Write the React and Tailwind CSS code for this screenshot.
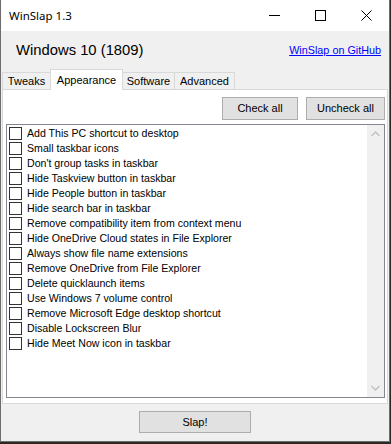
import { useState } from 'react';

const items = [
  'Add This PC shortcut to desktop',
  'Small taskbar icons',
  "Don't group tasks in taskbar",
  'Hide Taskview button in taskbar',
  'Hide People button in taskbar',
  'Hide search bar in taskbar',
  'Remove compatibility item from context menu',
  'Hide OneDrive Cloud states in File Explorer',
  'Always show file name extensions',
  'Remove OneDrive from File Explorer',
  'Delete quicklaunch items',
  'Use Windows 7 volume control',
  'Remove Microsoft Edge desktop shortcut',
  'Disable Lockscreen Blur',
  'Hide Meet Now icon in taskbar',
];

const tabs = [
  { name: 'Tweaks', w: 'w-[49px]' },
  { name: 'Appearance', w: 'w-[73px]' },
  { name: 'Software', w: 'w-[53px]' },
  { name: 'Advanced', w: 'w-[61px]' },
];

export default function App() {
  const [active, setActive] = useState('Appearance');
  const [checked, setChecked] = useState(items.map(() => false));

  const toggle = (i) => setChecked(prev => prev.map((c, j) => (j === i ? !c : c)));

  return (
    <div className="w-[391px] h-[444px] bg-[#2e2822] overflow-hidden" style={{ fontFamily: '"Liberation Sans", Arial, sans-serif' }}>
      {/* Window */}
      <div className="w-[390px] h-[442px] bg-[#f0f0f0] border-x border-b border-[#6d6d6d] flex flex-col">
        {/* Title bar */}
        <div className="h-[31px] bg-white flex items-center shrink-0">
          <span className="pl-[8px] text-[11.5px] text-black" style={{ fontFamily: '"Noto Sans", sans-serif' }}>WinSlap 1.3</span>
          <div className="ml-auto flex h-full">
            <div className="w-[46px] flex items-center justify-center">
              <div className="w-[11px] h-px bg-black"></div>
            </div>
            <div className="w-[46px] flex items-center justify-center">
              <div className="w-[11px] h-[11px] border border-black"></div>
            </div>
            <div className="w-[46px] flex items-center justify-center">
              <svg width="11" height="11" viewBox="0 0 11 11">
                <path d="M0.5 0.5 L10.5 10.5 M10.5 0.5 L0.5 10.5" stroke="black" strokeWidth="1" fill="none" />
              </svg>
            </div>
          </div>
        </div>

        {/* Header */}
        <div className="h-[38px] flex items-center shrink-0">
          <span className="pl-[15px] text-[14.8px] text-black">Windows 10 (1809)</span>
          <a href="#" className="ml-auto pr-[8px] text-[10.8px] text-[#0000ff] underline">WinSlap on GitHub</a>
        </div>

        {/* Tabs */}
        <div className="h-[20px] flex items-end pl-[2px] shrink-0 relative z-10">
          {tabs.map(t => {
            const sel = t.name === active;
            return (
              <button
                key={t.name}
                onClick={() => setActive(t.name)}
                className={sel
                  ? `${t.w} h-[21px] -mb-px -ml-px bg-white border border-b-0 border-[#d9d9d9] text-[11px] text-black flex items-start justify-center pt-[2px]`
                  : `${t.w} h-[17px] -ml-px bg-[#f0f0f0] border border-b-0 border-[#d9d9d9] text-[11px] text-black flex items-center justify-center`}
              >
                {t.name}
              </button>
            );
          })}
        </div>

        {/* Tab panel */}
        <div className="mx-[1px] h-[315px] bg-white border border-[#d9d9d9] pl-[3px] pr-[2px] pt-[7px] shrink-0">
          <div className="flex justify-end gap-[8px]">
            <button className="w-[76px] h-[23px] bg-[#e1e1e1] border border-[#adadad] text-[11px] text-black">Check all</button>
            <button className="w-[79px] h-[23px] bg-[#e1e1e1] border border-[#adadad] text-[11px] text-black">Uncheck all</button>
          </div>

          <div className="mt-[4px] h-[274px] border border-[#828790] bg-white flex">
            <div className="flex-1 pt-[1px] pl-[2px]">
              {items.map((label, i) => (
                <label key={label} className="h-[15px] flex items-center gap-[5px] cursor-default">
                  <span
                    onClick={() => toggle(i)}
                    className="w-[13px] h-[13px] border border-[#333] bg-white flex items-center justify-center shrink-0"
                  >
                    {checked[i] && (
                      <svg width="9" height="9" viewBox="0 0 9 9">
                        <path d="M1 4.5 L3.5 7 L8 1.5" stroke="black" strokeWidth="1.3" fill="none" />
                      </svg>
                    )}
                  </span>
                  <span className="text-[10.6px] text-black whitespace-nowrap leading-none">{label}</span>
                </label>
              ))}
            </div>
            {/* Scrollbar */}
            <div className="w-[17px] bg-[#f0f0f0] flex flex-col justify-between items-center py-[6px]">
              <svg width="9" height="6" viewBox="0 0 9 6">
                <path d="M0.5 5 L4.5 1 L8.5 5" stroke="#c2c2c2" strokeWidth="1.5" fill="none" />
              </svg>
              <svg width="9" height="6" viewBox="0 0 9 6">
                <path d="M0.5 1 L4.5 5 L8.5 1" stroke="#c2c2c2" strokeWidth="1.5" fill="none" />
              </svg>
            </div>
          </div>
        </div>

        {/* Bottom */}
        <div className="flex justify-center pt-[7px]">
          <button className="w-[112px] h-[22px] bg-[#e1e1e1] border border-[#adadad] text-[11px] text-black">Slap!</button>
        </div>
      </div>
    </div>
  );
}
